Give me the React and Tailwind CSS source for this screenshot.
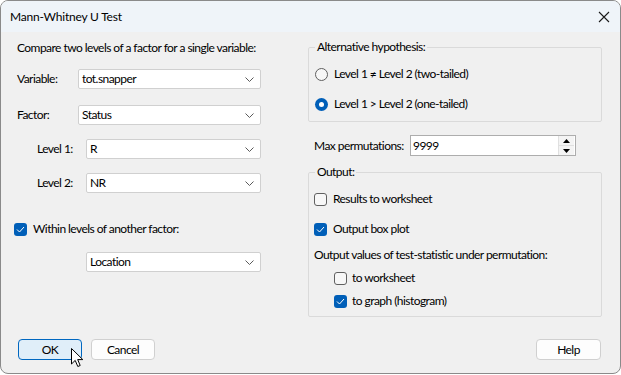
import React from "react";

function Chevron() {
  return (
    <svg width="9" height="5" viewBox="0 0 9 5" className="shrink-0">
      <polyline points="0.5,0.5 4.5,4.5 8.5,0.5" fill="none" stroke="#5a5a5a" strokeWidth="1" />
    </svg>
  );
}

function Combo({ value, className }) {
  return (
    <div className={"h-[20px] bg-white border border-[#d0d0d0] rounded-[2px] flex items-center pl-[3px] pr-[6px] " + className}>
      <span className="flex-1 leading-[16px]">{value}</span>
      <Chevron />
    </div>
  );
}

function Check({ checked }) {
  if (checked) {
    return (
      <div className="w-[13px] h-[13px] rounded-[3px] bg-[#005fb8] flex items-center justify-center shrink-0">
        <svg width="9" height="7" viewBox="0 0 9 7">
          <polyline points="1,3.5 3.5,6 8,1" fill="none" stroke="#ffffff" strokeWidth="1" />
        </svg>
      </div>
    );
  }
  return <div className="w-[13px] h-[13px] rounded-[3px] border border-[#606060] bg-[#f7f7f7] shrink-0" />;
}

function Radio({ checked }) {
  if (checked) {
    return (
      <div className="w-[13px] h-[13px] rounded-full bg-[#005fb8] flex items-center justify-center shrink-0">
        <div className="w-[5px] h-[5px] rounded-full bg-white" />
      </div>
    );
  }
  return <div className="w-[13px] h-[13px] rounded-full border border-[#5f5f5f] bg-[#f7f7f7] shrink-0" />;
}

function Button({ children, primary, className }) {
  return (
    <div
      className={
        "h-[21px] flex items-center justify-center rounded-[4px] border leading-[16px] " +
        (primary ? "bg-[#e0eef9] border-[#0067c0] " : "bg-[#fdfdfd] border-[#d0d0d0] ") +
        className
      }
    >
      {children}
    </div>
  );
}

export default function App() {
  return (
    <div className="w-[621px] h-[375px] bg-white font-['Lato',sans-serif] text-[12px] tracking-[-0.55px] text-black whitespace-nowrap">
      <div className="relative w-[621px] h-[374px] border border-[#8a8a8a] rounded-[8px] overflow-hidden flex flex-col bg-[#f0f0f0]">
        <div className="h-[31px] shrink-0 bg-[#eff4f9] flex items-center justify-between pl-[9px] pr-[8px]">
          <span className="leading-[16px] tracking-[-0.2px]">Mann-Whitney U Test</span>
          <svg width="12" height="12" viewBox="0 0 12 12" className="mr-[2px]">
            <path d="M1 1 L11 11 M11 1 L1 11" stroke="#1a1a1a" strokeWidth="1.1" />
          </svg>
        </div>
        <div className="flex-1 flex flex-col">
          <div className="flex pl-[16px]">
            <div className="w-[244px] flex flex-col">
              <div className="mt-[8px] leading-[16px]">Compare two levels of a factor for a single variable:</div>
              <div className="mt-[13px] flex items-center">
                <span className="w-[61px] leading-[16px]">Variable:</span>
                <Combo value="tot.snapper" className="w-[183px]" />
              </div>
              <div className="mt-[16px] flex items-center">
                <span className="w-[61px] leading-[16px]">Factor:</span>
                <Combo value="Status" className="w-[183px]" />
              </div>
              <div className="mt-[14px] flex items-center pl-[20px]">
                <span className="w-[49px] leading-[16px]">Level 1:</span>
                <Combo value="R" className="w-[175px]" />
              </div>
              <div className="mt-[14px] flex items-center pl-[20px]">
                <span className="w-[49px] leading-[16px]">Level 2:</span>
                <Combo value="NR" className="w-[175px]" />
              </div>
              <div className="mt-[28px] flex items-center ml-[-3px] gap-[6px]">
                <Check checked />
                <span className="leading-[16px]">Within levels of another factor:</span>
              </div>
              <div className="mt-[15px] ml-[69px]">
                <Combo value="Location" className="w-[175px]" />
              </div>
            </div>
            <div className="ml-[47px] w-[294px] flex flex-col">
              <fieldset className="mt-[7px] border border-[#dadada] rounded-[2px] pl-[6px] pb-[9px]">
                <legend className="px-[2px] leading-[16px]">Alternative hypothesis:</legend>
                <div className="mt-[11px] flex items-center gap-[6px]">
                  <Radio />
                  <span className="leading-[16px]">Level 1 ≠ Level 2 (two-tailed)</span>
                </div>
                <div className="mt-[14px] flex items-center gap-[6px]">
                  <Radio checked />
                  <span className="leading-[16px]">Level 1 &gt; Level 2 (one-tailed)</span>
                </div>
              </fieldset>
              <div className="mt-[13px] flex items-center pl-[6px]">
                <span className="w-[96px] leading-[16px]">Max permutations:</span>
                <div className="w-[166px] h-[21px] bg-white border border-[#adadad] flex items-center">
                  <span className="flex-1 pl-[2px] leading-[16px]">9999</span>
                  <div className="w-[16px] h-[19px] flex flex-col border-l border-[#e0e0e0] mr-[1px]">
                    <div className="flex-1 bg-[#f4f4f4] border-b border-[#e0e0e0] flex items-center justify-center">
                      <svg width="7" height="4" viewBox="0 0 7 4"><polygon points="3.5,0 7,4 0,4" fill="#000" /></svg>
                    </div>
                    <div className="flex-1 bg-[#f4f4f4] flex items-center justify-center">
                      <svg width="7" height="4" viewBox="0 0 7 4"><polygon points="0,0 7,0 3.5,4" fill="#000" /></svg>
                    </div>
                  </div>
                </div>
              </div>
              <fieldset className="mt-[8px] border border-[#dadada] rounded-[2px] pl-[5px] pb-[7px]">
                <legend className="ml-[1px] px-[2px] leading-[16px]">Output:</legend>
                <div className="mt-[11px] flex items-center gap-[6px]">
                  <Check />
                  <span className="leading-[16px]">Results to worksheet</span>
                </div>
                <div className="mt-[14px] flex items-center gap-[6px]">
                  <Check checked />
                  <span className="leading-[16px]">Output box plot</span>
                </div>
                <div className="mt-[10px] leading-[16px]">Output values of test-statistic under permutation:</div>
                <div className="mt-[7px] ml-[20px] flex items-center gap-[5px]">
                  <Check />
                  <span className="leading-[16px]">to worksheet</span>
                </div>
                <div className="mt-[7px] ml-[20px] flex items-center gap-[5px]">
                  <Check checked />
                  <span className="leading-[16px]">to graph (histogram)</span>
                </div>
              </fieldset>
            </div>
          </div>
          <div className="mt-[22px] flex items-center pl-[17px] pr-[19px]">
            <Button primary className="w-[64px]">OK</Button>
            <Button className="w-[64px] ml-[9px]">Cancel</Button>
            <div className="flex-1" />
            <Button className="w-[65px]">Help</Button>
          </div>
        </div>
        <svg width="13" height="20" viewBox="0 0 13 20" className="absolute left-[70px] top-[347px]">
          <path d="M0.5 0.5 L0.5 16 L4.2 12.4 L6.8 18.5 L9.2 17.5 L6.7 11.6 L11.8 11.6 Z" fill="#ffffff" stroke="#000000" strokeWidth="1" strokeLinejoin="round" />
        </svg>
      </div>
    </div>
  );
}
